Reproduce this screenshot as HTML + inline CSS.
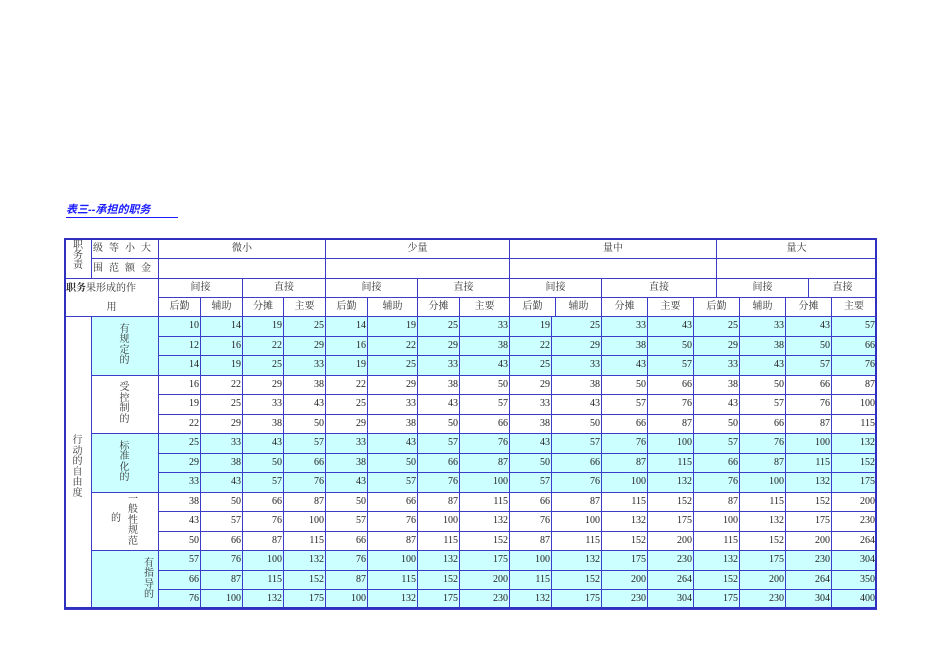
<!DOCTYPE html>
<html><head><meta charset="utf-8"><style>
body{margin:0;width:950px;height:672px;background:#fff;position:relative;overflow:hidden;font-family:"Liberation Serif","Noto Serif CJK SC","Noto Sans CJK SC",serif;font-size:10px;color:#222}
.t{position:absolute;left:66px;top:203px;font-style:italic;font-weight:bold;color:#1a1aff;font-size:11px;font-family:"Liberation Sans","Noto Sans CJK SC",sans-serif;border-bottom:1px solid #1a1aff;width:112px;line-height:14px}
.h{position:absolute;border:1px solid #3b3bcc;box-sizing:border-box;text-align:center;color:#333;background:#fff}
#wrap{position:absolute;left:64px;top:238px;width:813px;height:371px;border:2px solid #3030c0;box-sizing:border-box;pointer-events:none}
table{position:absolute;left:64px;top:316px;border-collapse:collapse;table-layout:fixed;width:813px}
td{border:1px solid #3b3bcc;height:18.5px;padding:0 1px 0 0;text-align:right;line-height:18px;font-size:10px;overflow:hidden;white-space:nowrap}
.c td{background:#ccffff}
td.l{text-align:center;line-height:10.5px;color:#333;background:#fff}
.c td.lc{background:#ccffff}
</style></head><body>
<div class="t">表三--承担的职务</div>
<!-- row 1 -->
<div class="h" style="left:64px;top:238px;width:28px;height:41px;line-height:10px;padding-top:2px">职<br>务<br>责</div>
<div class="h" style="left:91px;top:238px;width:68px;height:21px;line-height:19px;letter-spacing:6px">级等小大</div>
<div class="h" style="left:158px;top:238px;width:168px;height:21px;line-height:19px">微小</div>
<div class="h" style="left:325px;top:238px;width:185px;height:21px;line-height:19px">少量</div>
<div class="h" style="left:509px;top:238px;width:208px;height:21px;line-height:19px">量中</div>
<div class="h" style="left:716px;top:238px;width:161px;height:21px;line-height:19px">量大</div>
<!-- row 2 -->
<div class="h" style="left:91px;top:258px;width:68px;height:21px;line-height:19px;letter-spacing:6px">围范额金</div>
<div class="h" style="left:158px;top:258px;width:168px;height:21px"></div>
<div class="h" style="left:325px;top:258px;width:185px;height:21px"></div>
<div class="h" style="left:509px;top:258px;width:208px;height:21px"></div>
<div class="h" style="left:716px;top:258px;width:161px;height:21px"></div>
<!-- row 3/4 label -->
<div class="h" style="left:64px;top:278px;width:95px;height:39px;line-height:19px"><span style="display:block;text-align:left;padding-left:1px"><b>职务</b>果形成的作</span>用</div>
<!-- row 3 -->
<div class="h" style="left:158px;top:278px;width:85px;height:20px;line-height:18px">间接</div>
<div class="h" style="left:242px;top:278px;width:84px;height:20px;line-height:18px">直接</div>
<div class="h" style="left:325px;top:278px;width:93px;height:20px;line-height:18px">间接</div>
<div class="h" style="left:417px;top:278px;width:93px;height:20px;line-height:18px">直接</div>
<div class="h" style="left:509px;top:278px;width:93px;height:20px;line-height:18px">间接</div>
<div class="h" style="left:601px;top:278px;width:116px;height:20px;line-height:18px">直接</div>
<div class="h" style="left:716px;top:278px;width:93px;height:20px;line-height:18px">间接</div>
<div class="h" style="left:808px;top:278px;width:69px;height:20px;line-height:18px">直接</div>
<!-- row 4 -->
<div class="h" style="left:158px;top:297px;width:43px;height:20px;line-height:18px">后勤</div>
<div class="h" style="left:200px;top:297px;width:43px;height:20px;line-height:18px">辅助</div>
<div class="h" style="left:242px;top:297px;width:42px;height:20px;line-height:18px">分摊</div>
<div class="h" style="left:283px;top:297px;width:43px;height:20px;line-height:18px">主要</div>
<div class="h" style="left:325px;top:297px;width:43px;height:20px;line-height:18px">后勤</div>
<div class="h" style="left:367px;top:297px;width:51px;height:20px;line-height:18px">辅助</div>
<div class="h" style="left:417px;top:297px;width:43px;height:20px;line-height:18px">分摊</div>
<div class="h" style="left:459px;top:297px;width:51px;height:20px;line-height:18px">主要</div>
<div class="h" style="left:509px;top:297px;width:47px;height:20px;line-height:18px">后勤</div>
<div class="h" style="left:555px;top:297px;width:47px;height:20px;line-height:18px">辅助</div>
<div class="h" style="left:601px;top:297px;width:47px;height:20px;line-height:18px">分摊</div>
<div class="h" style="left:647px;top:297px;width:47px;height:20px;line-height:18px">主要</div>
<div class="h" style="left:693px;top:297px;width:47px;height:20px;line-height:18px">后勤</div>
<div class="h" style="left:739px;top:297px;width:47px;height:20px;line-height:18px">辅助</div>
<div class="h" style="left:785px;top:297px;width:47px;height:20px;line-height:18px">分摊</div>
<div class="h" style="left:831px;top:297px;width:46px;height:20px;line-height:18px">主要</div>

<table>
<colgroup><col style="width:27px"><col style="width:67px"><col style="width:42px"><col style="width:42px"><col style="width:41px"><col style="width:42px"><col style="width:42px"><col style="width:50px"><col style="width:42px"><col style="width:50px"><col style="width:42px"><col style="width:50px"><col style="width:46px"><col style="width:46px"><col style="width:46px"><col style="width:46px"><col style="width:46px"></colgroup>
<tr class="c"><td class="l" rowspan="15" style="vertical-align:middle;padding-top:10px;background:#fff">行<br>动<br>的<br>自<br>由<br>度</td><td class="l lc" rowspan="3">有<br>规<br>定<br>的</td><td>10</td><td>14</td><td>19</td><td>25</td><td>14</td><td>19</td><td>25</td><td>33</td><td>19</td><td>25</td><td>33</td><td>43</td><td>25</td><td>33</td><td>43</td><td>57</td></tr>
<tr class="c"><td>12</td><td>16</td><td>22</td><td>29</td><td>16</td><td>22</td><td>29</td><td>38</td><td>22</td><td>29</td><td>38</td><td>50</td><td>29</td><td>38</td><td>50</td><td>66</td></tr>
<tr class="c"><td>14</td><td>19</td><td>25</td><td>33</td><td>19</td><td>25</td><td>33</td><td>43</td><td>25</td><td>33</td><td>43</td><td>57</td><td>33</td><td>43</td><td>57</td><td>76</td></tr>
<tr><td class="l" rowspan="3">受<br>控<br>制<br>的</td><td>16</td><td>22</td><td>29</td><td>38</td><td>22</td><td>29</td><td>38</td><td>50</td><td>29</td><td>38</td><td>50</td><td>66</td><td>38</td><td>50</td><td>66</td><td>87</td></tr>
<tr><td>19</td><td>25</td><td>33</td><td>43</td><td>25</td><td>33</td><td>43</td><td>57</td><td>33</td><td>43</td><td>57</td><td>76</td><td>43</td><td>57</td><td>76</td><td>100</td></tr>
<tr><td>22</td><td>29</td><td>38</td><td>50</td><td>29</td><td>38</td><td>50</td><td>66</td><td>38</td><td>50</td><td>66</td><td>87</td><td>50</td><td>66</td><td>87</td><td>115</td></tr>
<tr class="c"><td class="l lc" rowspan="3">标<br>准<br>化<br>的</td><td>25</td><td>33</td><td>43</td><td>57</td><td>33</td><td>43</td><td>57</td><td>76</td><td>43</td><td>57</td><td>76</td><td>100</td><td>57</td><td>76</td><td>100</td><td>132</td></tr>
<tr class="c"><td>29</td><td>38</td><td>50</td><td>66</td><td>38</td><td>50</td><td>66</td><td>87</td><td>50</td><td>66</td><td>87</td><td>115</td><td>66</td><td>87</td><td>115</td><td>152</td></tr>
<tr class="c"><td>33</td><td>43</td><td>57</td><td>76</td><td>43</td><td>57</td><td>76</td><td>100</td><td>57</td><td>76</td><td>100</td><td>132</td><td>76</td><td>100</td><td>132</td><td>175</td></tr>
<tr><td class="l" rowspan="3" style="position:relative"><span style="position:absolute;left:19px;top:21px">的</span><span style="position:absolute;left:36px;top:2px">一<br>般<br>性<br>规<br>范</span></td><td>38</td><td>50</td><td>66</td><td>87</td><td>50</td><td>66</td><td>87</td><td>115</td><td>66</td><td>87</td><td>115</td><td>152</td><td>87</td><td>115</td><td>152</td><td>200</td></tr>
<tr><td>43</td><td>57</td><td>76</td><td>100</td><td>57</td><td>76</td><td>100</td><td>132</td><td>76</td><td>100</td><td>132</td><td>175</td><td>100</td><td>132</td><td>175</td><td>230</td></tr>
<tr><td>50</td><td>66</td><td>87</td><td>115</td><td>66</td><td>87</td><td>115</td><td>152</td><td>87</td><td>115</td><td>152</td><td>200</td><td>115</td><td>152</td><td>200</td><td>264</td></tr>
<tr class="c"><td class="l lc" rowspan="3" style="text-align:right;padding-right:4px">有<br>指<br>导<br>的</td><td>57</td><td>76</td><td>100</td><td>132</td><td>76</td><td>100</td><td>132</td><td>175</td><td>100</td><td>132</td><td>175</td><td>230</td><td>132</td><td>175</td><td>230</td><td>304</td></tr>
<tr class="c"><td>66</td><td>87</td><td>115</td><td>152</td><td>87</td><td>115</td><td>152</td><td>200</td><td>115</td><td>152</td><td>200</td><td>264</td><td>152</td><td>200</td><td>264</td><td>350</td></tr>
<tr class="c"><td>76</td><td>100</td><td>132</td><td>175</td><td>100</td><td>132</td><td>175</td><td>230</td><td>132</td><td>175</td><td>230</td><td>304</td><td>175</td><td>230</td><td>304</td><td>400</td></tr>
</table>
<div id="wrap"></div>
</body></html>
